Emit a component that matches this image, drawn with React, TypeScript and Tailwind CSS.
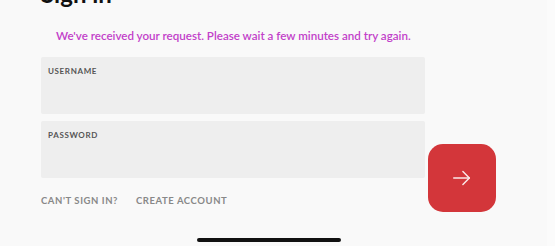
import React from "react";

export default function App() {
  return (
    <div
      className="w-[555px] h-[246px] bg-[#f9f9f9] overflow-hidden relative"
      style={{ fontFamily: "Lato, 'Noto Sans', sans-serif" }}
    >
      <div className="flex flex-col pl-[41px] w-[497px]">
        <div className="mt-[-19px] h-[26px] text-[24px] leading-[26px] font-bold text-[#111]">
          Sign in
        </div>
        <div className="mt-[21px] pl-[15px] h-[16px] text-[11.6px] leading-[16px] font-semibold text-[#c23fc9]">
          We've received your request. Please wait a few minutes and try again.
        </div>
        <div className="mt-[13px] flex items-start">
          <div className="flex flex-col gap-[7px] w-[384px]">
            <div className="h-[57px] bg-[#eeeeee] rounded-[2px] px-[7px] pt-[9px]">
              <div className="text-[8px] leading-[10px] font-bold tracking-[0.08em] text-[#555]">
                USERNAME
              </div>
            </div>
            <div className="h-[57px] bg-[#eeeeee] rounded-[2px] px-[7px] pt-[9px]">
              <div className="text-[8px] leading-[10px] font-bold tracking-[0.08em] text-[#555]">
                PASSWORD
              </div>
            </div>
          </div>
        </div>
        <div className="mt-[17px] flex gap-[18px] text-[9.5px] leading-[12px] font-bold tracking-[0.06em] text-[#888]">
          <span>CAN'T SIGN IN?</span>
          <span>CREATE ACCOUNT</span>
        </div>
      </div>
      <button className="absolute left-[428px] top-[144px] w-[68px] h-[68px] rounded-[15px] bg-[#d3363a] flex items-center justify-center">
        <svg width="22" height="22" viewBox="0 0 24 24" fill="none" stroke="#fbe9e9" strokeWidth="1.6" strokeLinecap="round" strokeLinejoin="round">
          <path d="M3 12h17" />
          <path d="M13 5l7 7-7 7" />
        </svg>
      </button>
      <div className="absolute left-[197px] top-[238px] w-[144px] h-[4px] rounded-full bg-[#111]" />
      <div className="absolute left-[547px] top-0 w-[8px] h-full bg-[#fbfbfb]" />
    </div>
  );
}
